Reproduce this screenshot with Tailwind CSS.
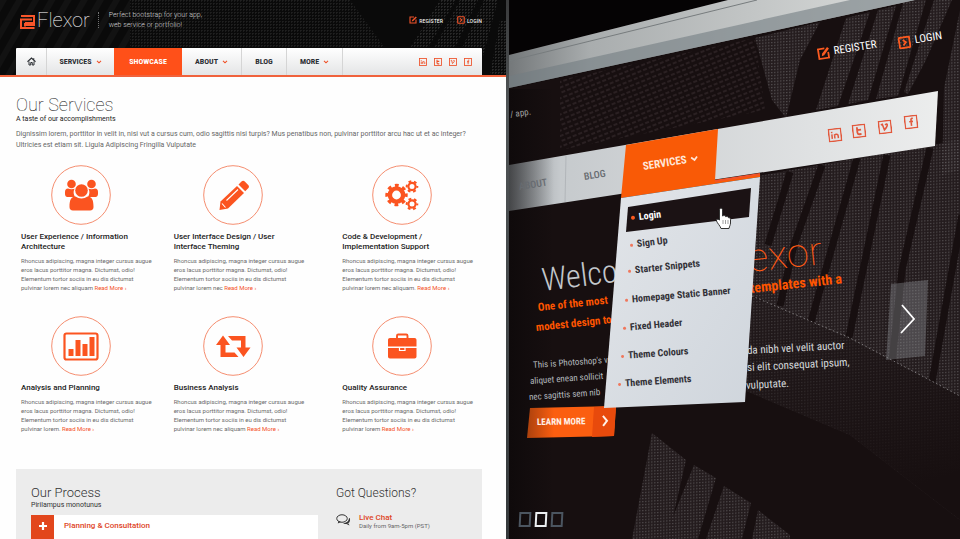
<!DOCTYPE html>
<html lang="en">
<head>
<meta charset="utf-8">
<meta name="viewport" content="width=device-width, initial-scale=1">
<title>Flexor</title>
<script src="https://cdn.jsdelivr.net/npm/@tailwindcss/browser@4"></script>
</head>
<body class="bg-[#0b0909] font-['Roboto',sans-serif]">
<svg class="absolute size-0" aria-hidden="true">
  <defs>
    <symbol id="chev" viewBox="0 0 8 6"><path d="M1 1.2 4 4.2 7 1.2" fill="none" stroke="currentColor" stroke-width="1.7"/></symbol>
    <symbol id="register" viewBox="0 0 16 16"><path d="M10 2H2v12h12V7" fill="none" stroke="currentColor" stroke-width="2.2"/><path d="M5.500 11 6.200 8 13.500.8 15.600 2.900 8.500 10.200Z" fill="currentColor"/></symbol>
    <symbol id="login" viewBox="0 0 16 16"><rect x="1.500" y="1.500" width="13" height="13" rx="1" fill="none" stroke="currentColor" stroke-width="2.300"/><path d="M6.300 4.700 9.700 8 6.300 11.300" fill="none" stroke="currentColor" stroke-width="2.200"/></symbol>
    <symbol id="in" viewBox="0 0 16 16"><rect x="1" y="1" width="14" height="14" fill="none" stroke="currentColor" stroke-width="1.700"/><path d="M4.500 7v5M4.500 4v1.600M7.500 12V7M7.500 9c0-2.400 4-2.400 4 0v3" fill="none" stroke="currentColor" stroke-width="1.700"/></symbol>
    <symbol id="tw" viewBox="0 0 16 16"><rect x="1" y="1" width="14" height="14" fill="none" stroke="currentColor" stroke-width="1.700"/><path d="M6 3.500v6c0 1.500.6 2.200 2 2.200h2.500M6 6.700h4.500" fill="none" stroke="currentColor" stroke-width="2.100"/></symbol>
    <symbol id="vi" viewBox="0 0 16 16"><rect x="1" y="1" width="14" height="14" fill="none" stroke="currentColor" stroke-width="1.700"/><path d="M3.500 5.200 5.200 4.600 7 11.200C9.500 9 11 7 10.800 5.500c-.2-1-1.500-.8-2.300.3" fill="none" stroke="currentColor" stroke-width="1.800"/></symbol>
    <symbol id="fb" viewBox="0 0 16 16"><rect x="1" y="1" width="14" height="14" fill="none" stroke="currentColor" stroke-width="1.700"/><path d="M10.500 4H9.600C8.500 4 8.200 4.600 8.200 5.500V12.500M6 7.500h4.300" fill="none" stroke="currentColor" stroke-width="1.800"/></symbol>
  </defs>
</svg>
<main class="grid h-screen grid-cols-[506fr_3px_451fr] overflow-hidden">
  <section class="flex flex-col overflow-hidden bg-[#fefefe]">
    <header class="relative border-b-2 border-[#f0623c] bg-[#0a0a0a]">
      <svg class="absolute inset-0 h-full w-full" preserveAspectRatio="xMinYMin slice" viewBox="0 0 506 75" aria-hidden="true">
        <defs>
          <pattern id="mesh" width="3" height="3" patternUnits="userSpaceOnUse"><path d="M0 .5H2M.5 0V2" stroke="#2b2b2b" stroke-width=".8"/></pattern>
          <pattern id="slant" width="14" height="14" patternUnits="userSpaceOnUse" patternTransform="rotate(30)"><rect width="6" height="14" fill="#121212"/></pattern>
        </defs>
        <rect width="130" height="75" fill="url(#slant)"/>
        <path d="M130 0H350L385 48H130Z" fill="url(#mesh)" opacity=".7"/>
        <path d="M410 48 440 0H456L428 48ZM434 48 460 0H478L455 48ZM462 48 484 0H498L482 60ZM490 75 500 20H506V75Z" fill="url(#mesh)"/>
      </svg>
      <div class="relative flex flex-col pr-6 pl-4">
        <div class="flex h-12 items-center pb-2 pl-1 text-white">
          <a href="#" class="flex items-center gap-px" aria-label="Flexor">
            <svg class="mt-1 size-4 text-[#f8552a]" viewBox="0 0 16 16" fill="none" stroke="currentColor" stroke-width="2" aria-hidden="true"><path d="M1 2H14V9H5M12 5.500H1V14H14.500M5 12.500V9M1 5.500H10M5 11H15"/></svg>
            <span class="text-[20px] leading-6 font-thin">Flexor</span>
          </a>
          <span class="ml-2 h-4 border-l border-dotted border-neutral-500"></span>
          <p class="ml-2.5 text-[7px] leading-[10px] font-light text-neutral-300">Perfect bootstrap for your app,<br>web service or portfolio!</p>
          <div class="ml-auto flex gap-3.5 font-['Roboto_Condensed','Liberation_Sans_Narrow',sans-serif] text-[6px] text-white">
            <a href="#" class="flex items-center gap-0.5"><svg class="size-2 text-[#f0532a]" aria-hidden="true"><use href="#register"/></svg>REGISTER</a>
            <a href="#" class="flex items-center gap-0.5"><svg class="size-2 text-[#f0532a]" aria-hidden="true"><use href="#login"/></svg>LOGIN</a>
          </div>
        </div>
        <nav class="flex h-[27px] rounded-t-[1px] bg-linear-to-b from-white to-[#e4e5e6] font-['Roboto_Condensed','Liberation_Sans_Narrow',sans-serif] text-[8px] font-bold text-[#2b2e33]">
          <a href="#" aria-label="Home" class="flex w-[31px] items-center justify-center border-r border-[#d5d5d5]"><svg class="size-[9px]" viewBox="0 0 18 18" fill="none" stroke="currentColor" aria-hidden="true"><path d="M1 9.500 9 2 17 9.500M13.500 2.500V6" stroke-width="2.200"/><path d="M4 9V16H7.500V11H10.500V16H14V9" stroke-width="2"/></svg></a>
          <a href="#" class="flex w-[67px] items-center justify-center gap-1">SERVICES<svg class="h-1 w-1.5 text-[#f0532a]" aria-hidden="true"><use href="#chev"/></svg></a>
          <a href="#" class="flex w-[68px] items-center justify-center bg-[#ff5019] text-white">SHOWCASE</a>
          <a href="#" class="flex w-[60px] items-center justify-center gap-1 border-r border-[#d5d5d5]">ABOUT<svg class="h-1 w-1.5 text-[#f0532a]" aria-hidden="true"><use href="#chev"/></svg></a>
          <a href="#" class="flex w-[45px] items-center justify-center border-r border-[#d5d5d5]">BLOG</a>
          <a href="#" class="flex w-[56px] items-center justify-center gap-1 border-r border-[#d5d5d5]">MORE<svg class="h-1 w-1.5 text-[#f0532a]" aria-hidden="true"><use href="#chev"/></svg></a>
          <div class="ml-auto flex items-center gap-[7px] pr-2.5 text-[#ee5028]">
            <a href="#" aria-label="LinkedIn"><svg class="size-2" aria-hidden="true"><use href="#in"/></svg></a>
            <a href="#" aria-label="Twitter"><svg class="size-2" aria-hidden="true"><use href="#tw"/></svg></a>
            <a href="#" aria-label="Vimeo"><svg class="size-2" aria-hidden="true"><use href="#vi"/></svg></a>
            <a href="#" aria-label="Facebook"><svg class="size-2" aria-hidden="true"><use href="#fb"/></svg></a>
          </div>
        </nav>
      </div>
    </header>

    <div class="pt-[18px] pr-6 pl-4">
      <h1 class="text-[18px] leading-5 font-thin text-[#111]">Our Services</h1>
      <p class="text-[7px] leading-[8px] text-[#222]">A taste of our accomplishments</p>
      <p class="mt-1.5 text-[7px] leading-[11px] whitespace-nowrap text-[#666]">Dignissim lorem, porttitor in velit in, nisi vut a cursus cum, odio sagittis nisi turpis? Mus penatibus non, pulvinar porttitor arcu hac ut et ac integer?<br>Ultricies est etiam sit. Ligula Adipiscing Fringilla Vulputate</p>
    </div>

    <div class="grid grid-cols-[153fr_169fr_164fr] gap-y-6 pt-[14px] pl-[21px] text-[6px] leading-[9px] text-[#6a6a6a]">
      <article class="flex flex-col gap-1">
        <svg class="ml-[30px] size-[60px]" viewBox="0 0 60 60" aria-hidden="true"><circle cx="30" cy="30" r="29.300" fill="none" stroke="#f58e70"/><g fill="#fb5420"><circle cx="20.500" cy="19" r="4.300"/><circle cx="40.500" cy="19" r="4.300"/><path d="M14 27c0-2 1-3.500 3-3.500 2 1 4.500 1 6.500.3C22 27 22.500 29.500 24 32h-7c-2.300 0-3.200-1-3-5ZM47 27c0-2-1-3.500-3-3.500-2 1-4.500 1-6.500.3C39 27 38.500 29.500 37 32h7c2.300 0 3.200-1 3-5Z"/><circle cx="30.500" cy="25.500" r="6.300"/><path d="M18.500 42c0-7 1.500-10.500 6-10.500 3.500 2.600 8.500 2.600 12 0 4.500 0 6 3.500 6 10.500 0 2-1.200 3.500-3.500 3.500H22c-2.300 0-3.500-1.500-3.500-3.500Z"/></g></svg>
        <h2 class="pt-[3px] text-[8px] leading-[10px] font-medium text-[#222]">User Experience / Information<br>Architecture</h2>
        <p>Rhoncus adipiscing, magna integer cursus augue<br>eros lacus porttitor magna. Dictumst, odio!<br>Elementum tortor sociis in eu dis dictumst<br>pulvinar lorem nec aliquam <a href="#" class="text-[#f4511e]">Read More ›</a></p>
      </article>
      <article class="flex flex-col gap-1">
        <svg class="ml-[29px] size-[60px]" viewBox="0 0 60 60" aria-hidden="true"><circle cx="30" cy="30" r="29.300" fill="none" stroke="#f58e70"/><g fill="#fb5420"><path d="M34 21 41 28 25 43.500 16.500 45 17.500 36.500Z"/><path d="m35.500 19.500 3-3c1-1 2.300-1 3.300 0l3.400 3.400c1 1 1 2.300 0 3.300l-3 3Z"/></g><path d="M23.500 35.500 35 24.500M19 38.500l3.500 4" fill="none" stroke="#fff" stroke-width="1.100"/></svg>
        <h2 class="pt-[3px] text-[8px] leading-[10px] font-medium text-[#222]">User Interface Design / User<br>Interface Theming</h2>
        <p>Rhoncus adipiscing, magna integer cursus augue<br>eros lacus porttitor magna. Dictumst, odio!<br>Elementum tortor sociis in eu dis dictumst<br>pulvinar lorem nec <a href="#" class="text-[#f4511e]">Read More ›</a></p>
      </article>
      <article class="flex flex-col gap-1">
        <svg class="ml-[30px] size-[60px]" viewBox="0 0 60 60" aria-hidden="true"><circle cx="30" cy="30" r="29.300" fill="none" stroke="#f58e70"/><g fill="none" stroke="#fb5420"><circle cx="24.500" cy="30" r="6.600" stroke-width="4.400"/><circle cx="24.500" cy="30" r="9.500" stroke-width="3.400" stroke-dasharray="3.730 3.730" stroke-dashoffset="1.870"/><circle cx="40" cy="21.500" r="3.600" stroke-width="2.200"/><circle cx="40" cy="21.500" r="5.300" stroke-width="2" stroke-dasharray="2.775 2.775" stroke-dashoffset="1.400"/><circle cx="40" cy="39" r="3.600" stroke-width="2.200"/><circle cx="40" cy="39" r="5.300" stroke-width="2" stroke-dasharray="2.775 2.775" stroke-dashoffset="1.400"/></g></svg>
        <h2 class="pt-[3px] text-[8px] leading-[10px] font-medium text-[#222]">Code &amp; Development /<br>Implementation Support</h2>
        <p>Rhoncus adipiscing, magna integer cursus augue<br>eros lacus porttitor magna. Dictumst, odio!<br>Elementum tortor sociis in eu dis dictumst<br>pulvinar lorem nec aliquam. <a href="#" class="text-[#f4511e]">Read More ›</a></p>
      </article>
      <article class="flex flex-col gap-1">
        <svg class="ml-[30px] size-[60px]" viewBox="0 0 60 60" aria-hidden="true"><circle cx="30" cy="30" r="29.300" fill="none" stroke="#f58e70"/><rect x="13.500" y="17.500" width="33" height="26" rx="2" fill="none" stroke="#fb5420" stroke-width="2.200"/><path d="M17.500 33h5v7h-5ZM24.500 24h5v16h-5ZM31.500 28h5v12h-5ZM38.500 21h5v19h-5Z" fill="#fb5420"/></svg>
        <h2 class="pt-[3px] text-[8px] leading-[10px] font-medium text-[#222]">Analysis and Planning</h2>
        <p>Rhoncus adipiscing, magna integer cursus augue<br>eros lacus porttitor magna. Dictumst, odio!<br>Elementum tortor sociis in eu dis dictumst<br>pulvinar lorem. <a href="#" class="text-[#f4511e]">Read More ›</a></p>
      </article>
      <article class="flex flex-col gap-1">
        <svg class="ml-[29px] size-[60px]" viewBox="0 0 60 60" aria-hidden="true"><circle cx="30" cy="30" r="29.300" fill="none" stroke="#f58e70"/><path d="M20 19.500 27 29H22.500V36.500H31.500L35.500 41H17.500V29H13ZM25 20H42.500V31.500H47.500L40.500 41 33.500 31.500H38V24.500H29Z" fill="#fb5420"/></svg>
        <h2 class="pt-[3px] text-[8px] leading-[10px] font-medium text-[#222]">Business Analysis</h2>
        <p>Rhoncus adipiscing, magna integer cursus augue<br>eros lacus porttitor magna. Dictumst, odio!<br>Elementum tortor sociis in eu dis dictumst<br>pulvinar lorem nec aliquam <a href="#" class="text-[#f4511e]">Read More ›</a></p>
      </article>
      <article class="flex flex-col gap-1">
        <svg class="ml-[30px] size-[60px]" viewBox="0 0 60 60" aria-hidden="true"><circle cx="30" cy="30" r="29.300" fill="none" stroke="#f58e70"/><path d="M25 23v-3.200c0-.7.500-1.300 1.300-1.300h7.900c.8 0 1.300.6 1.300 1.300V23" fill="none" stroke="#fb5420" stroke-width="1.900"/><path d="M18 22H42.500c1.200 0 2 .8 2 2v6.500H16V24c0-1.200.8-2 2-2ZM16 32H44.500v8.500c0 1.200-.8 2-2 2H18c-1.200 0-2-.8-2-2Z" fill="#fb5420"/><path d="M27.500 31.500v3h5.500v-3" fill="none" stroke="#fff" stroke-width="1.200"/></svg>
        <h2 class="pt-[3px] text-[8px] leading-[10px] font-medium text-[#222]">Quality Assurance</h2>
        <p>Rhoncus adipiscing, magna integer cursus augue<br>eros lacus porttitor magna. Dictumst, odio!<br>Elementum tortor sociis in eu dis dictumst<br>pulvinar lorem <a href="#" class="text-[#f4511e]">Read More ›</a></p>
      </article>
    </div>

    <div class="mt-9 mr-6 ml-4 grid min-h-24 flex-none grid-cols-[305fr_146fr] bg-[#ececec] pt-4 pl-[15px]">
      <div>
        <h2 class="text-[13px] leading-4 font-light text-[#333]">Our Process</h2>
        <p class="text-[7px] leading-[8px] text-[#333]">Pirilampus monotunus</p>
        <div class="mt-1.5 mr-[18px] flex h-12 bg-white">
          <button type="button" aria-label="Expand" class="flex w-[23px] justify-center bg-[#e2461c] pt-1.5"><svg class="size-2.5 text-white" viewBox="0 0 10 10" aria-hidden="true"><path d="M5 1V9M1 5H9" stroke="currentColor" stroke-width="2.200"/></svg></button>
          <h3 class="pt-1.5 pl-2.5 text-[8px] leading-[10px] font-medium text-[#de451f]">Planning &amp; Consultation</h3>
        </div>
      </div>
      <div>
        <h2 class="text-[12px] leading-4 font-light text-[#333]">Got Questions?</h2>
        <div class="mt-3 flex gap-2">
          <svg class="mt-px h-3 w-[15px]" viewBox="0 0 30 24" aria-hidden="true"><path d="M21 20c5-1 8-5 7-11l-2-1c0 6-5 10-12 10 2 2 5 2 7 2l6 3-2-4Z" fill="#333"/><ellipse cx="12" cy="9" rx="10.500" ry="7.500" fill="#ececec" stroke="#333" stroke-width="2"/><path d="M5 14 3.500 19 10 16" fill="#333"/></svg>
          <div>
            <a href="#" class="block text-[8px] leading-[9px] font-medium text-[#de451f]">Live Chat</a>
            <p class="text-[6px] leading-[8px] text-[#666]">Daily from 9am-5pm (PST)</p>
          </div>
        </div>
      </div>
    </div>
  </section>

  <div class="bg-linear-to-b from-[#3a3b3c] via-[#505456] via-20% to-[#35393b]"></div>

  <section class="relative overflow-hidden bg-[#150e0f] font-['Roboto_Condensed','Liberation_Sans_Narrow',sans-serif]">
    <svg class="absolute inset-0 h-full w-full" viewBox="509 0 451 539" preserveAspectRatio="xMinYMin slice" aria-hidden="true">
      <defs>
        <pattern id="dots" width="3" height="3" patternUnits="userSpaceOnUse" patternTransform="skewY(-4)"><rect width="3" height="3" fill="#2a2224"/><rect width="1.500" height="1.200" fill="#625e60"/></pattern>
        <pattern id="faint" width="6" height="5" patternUnits="userSpaceOnUse" patternTransform="rotate(-22)"><rect width="4" height="2" fill="#2a2022"/></pattern>
        <linearGradient id="chrome" x1="0" x2="1"><stop offset="0" stop-color="#74787a"/><stop offset=".2" stop-color="#a9adae"/><stop offset="1" stop-color="#dcdedd"/></linearGradient>
        <linearGradient id="bar" x1="0" x2="1"><stop offset="0" stop-color="#8f9498"/><stop offset=".12" stop-color="#c6cacd"/><stop offset="1" stop-color="#eceded"/></linearGradient>
        <linearGradient id="edge" x1="0" x2="1"><stop offset="0" stop-color="#080607"/><stop offset="1" stop-color="#080607" stop-opacity="0"/></linearGradient>
        <linearGradient id="fade" x1="0" y1="0" x2=".3" y2="1"><stop offset="0" stop-color="#170f10" stop-opacity="0"/><stop offset="1" stop-color="#170f10"/></linearGradient>
        <linearGradient id="menu" x1="0" y1="0" x2="1" y2="1"><stop offset="0" stop-color="#e2e5e9"/><stop offset="1" stop-color="#cfd5dc"/></linearGradient>
      </defs>
      <path d="M509 89 912 0H960V539H509Z" fill="#170f10"/>
      <path d="M560 80 755 38 765 110 560 150Z" fill="url(#faint)"/>
      <path d="M755 38 820 22 800 60 786 118 772 100ZM846 18 870 12 838 106 816 110ZM878 10 896 6 868 100 848 104ZM904 0 926 0 898 96 876 99ZM934 0H952L926 60 908 94 904 92ZM960 10V170L942 175 944 88Z" fill="url(#dots)" opacity=".75"/>
      <path d="M758 176 960 140V396L848 338 752 296Z" fill="url(#dots)" opacity=".7"/>
      <path d="M790 172 768 245M822 165 794 245 780 306M857 158 811 322M887 155 848 342M930 148 902 270 892 362M962 215 932 382" fill="none" stroke="#170f10" stroke-width="7"/>
      <path d="M750 296 850 338 960 396V520L850 435 744 390Z" fill="url(#dots)" opacity=".6"/>
      <path d="M750 296 850 338 960 396V520L850 435 744 390Z" fill="url(#fade)"/>
      <path d="M752 296 850 338 960 396" fill="none" stroke="#7d797b" stroke-width="1" stroke-dasharray="1.500 2.500"/>
      <path d="M652 433 686 460 668 539H632ZM694 465 716 478 698 539H664ZM724 486 751 503 742 539H706ZM758 510 790 535V539H752Z" fill="url(#dots)" opacity=".7"/>
      <path d="M509 0H728L509 55Z" fill="#050304"/>
      <path d="M509 55 728 0H915L509 88Z" fill="url(#chrome)"/>
      <path d="M509 61 757 0" stroke="#777c7e" stroke-width="1"/>
      <path d="M509 76 850 0H915L509 88Z" fill="#737d82" opacity=".6"/>
      <path d="M509 165 938 91 935 146 509 211Z" fill="url(#bar)"/>
      <path d="M566 156 565 202" stroke="#b2b6ba"/>
      <path d="M626 145 718 129 715 180 760 174V177L621 198Z" fill="#f95a06"/>
      <path d="M715 181 760 174" stroke="#f0532a" stroke-width="2"/>
      <path d="M891 284 928 280 925 356 886 360Z" fill="#8a8c92" opacity=".4"/>
      <path d="M902 305 914 319 901 333" fill="none" stroke="#fff" stroke-width="1.800"/>
      <path d="M530 408 616 406 614 436 527 438Z" fill="#fb5e10"/>
      <path d="M594 407 616 406 614 436 592 437Z" fill="#e84a0c"/>
      <rect x="509" y="89" width="45" height="450" fill="url(#edge)" opacity=".55"/>
    </svg>

    <span class="absolute top-[107px] left-px -rotate-8 text-[9px] leading-3 text-neutral-400">/ app.</span>
    <a href="#" class="absolute top-[46px] left-[308px] flex origin-left -rotate-9 items-center gap-1 text-[11px] leading-4 text-white"><svg class="size-[13px] text-[#fb5a20]" aria-hidden="true"><use href="#register"/></svg>REGISTER</a>
    <a href="#" class="absolute top-[35px] left-[389px] flex origin-left -rotate-9 items-center gap-1 text-[11px] leading-4 text-white"><svg class="size-[13px] text-[#fb5a20]" aria-hidden="true"><use href="#login"/></svg>LOGIN</a>

    <a href="#" class="absolute top-[179px] left-[10px] origin-left -rotate-9 text-[10px] leading-4 font-medium text-[#676b70]">ABOUT</a>
    <a href="#" class="absolute top-[169px] left-[75px] origin-left -rotate-9 text-[10px] leading-4 font-medium text-[#676b70]">BLOG</a>
    <a href="#" class="absolute top-[159px] left-[134px] flex origin-left -rotate-9 items-center gap-1 text-[11px] leading-4 font-bold text-[#ffe6d8]">SERVICES<svg class="h-1.5 w-2" aria-hidden="true"><use href="#chev"/></svg></a>
    <a href="#" aria-label="LinkedIn" class="absolute top-[128px] left-[319px] -rotate-6 text-[#e2583c]"><svg class="size-[14px]" aria-hidden="true"><use href="#in"/></svg></a>
    <a href="#" aria-label="Twitter" class="absolute top-[124px] left-[343px] -rotate-6 text-[#e2583c]"><svg class="size-[14px]" aria-hidden="true"><use href="#tw"/></svg></a>
    <a href="#" aria-label="Vimeo" class="absolute top-[120px] left-[369px] -rotate-6 text-[#e2583c]"><svg class="size-[14px]" aria-hidden="true"><use href="#vi"/></svg></a>
    <a href="#" aria-label="Facebook" class="absolute top-[115px] left-[395px] -rotate-6 text-[#e2583c]"><svg class="size-[14px]" aria-hidden="true"><use href="#fb"/></svg></a>

    <h2 class="leading-10">
      <span class="absolute top-[260px] left-[33px] origin-left -rotate-7 text-[32px] font-light text-[#c3c7cb]">Welco</span>
      <span class="absolute top-[239px] left-[239px] origin-left -rotate-6 font-['Roboto',sans-serif] text-[40px] font-thin text-[#ff5a14]">exor</span>
    </h2>
    <p class="leading-4 font-bold whitespace-nowrap text-[#ff5500]">
      <span class="absolute top-[300px] left-[29px] origin-left -rotate-6 text-[11px]">One of the most</span>
      <span class="absolute top-[320px] left-[27px] origin-left -rotate-6 text-[11px]">modest design to</span>
      <span class="absolute top-[280px] left-[241px] origin-left -rotate-6 text-[14px]">templates with a</span>
    </p>
    <p class="text-[9px] leading-4 whitespace-nowrap text-[#b4babf]">
      <span class="absolute top-[357px] left-[24px] origin-left -rotate-4">This is Photoshop's v</span>
      <span class="absolute top-[373px] left-[21px] origin-left -rotate-4">aliquet enean sollicit</span>
      <span class="absolute top-[389px] left-[20px] origin-left -rotate-4">nec sagittis sem nib</span>
    </p>
    <p class="text-[11px] leading-4 whitespace-nowrap text-[#d5d9db]">
      <span class="absolute top-[343px] left-[238px] origin-left -rotate-3">da nibh vel velit auctor</span>
      <span class="absolute top-[360px] left-[238px] origin-left -rotate-3">si elit consequat ipsum,</span>
      <span class="absolute top-[378px] left-[237px] origin-left -rotate-3">vulputate.</span>
    </p>
    <button type="button" class="absolute top-[414px] left-[28px] flex origin-left -rotate-1 items-center gap-4 text-[9px] leading-4 font-bold text-[#fff1e8]">LEARN MORE<svg class="h-3 w-2" viewBox="0 0 8 12" aria-hidden="true"><path d="M2 1 6 6 2 11" fill="none" stroke="currentColor" stroke-width="2"/></svg></button>

    <svg class="absolute inset-0 h-full w-full" viewBox="509 0 451 539" preserveAspectRatio="xMinYMin slice" aria-hidden="true">
      <path d="M621 198 760 177 745 402 604 408Z" fill="url(#menu)"/>
      <path d="M628 207 751 188 749 217 626 232Z" fill="#1b1214"/>
    </svg>
    <ul class="text-[10px] leading-4 font-bold whitespace-nowrap text-[#333238]">
      <li class="absolute top-[210px] left-[122px] flex origin-left -rotate-7 items-center gap-1 text-white before:size-1 before:rounded-full before:bg-[#fb5a20]"><a href="#">Login</a></li>
      <li class="absolute top-[237px] left-[121px] flex origin-left -rotate-7 items-center gap-1 before:size-[3px] before:rounded-full before:bg-[#f0775c]"><a href="#">Sign Up</a></li>
      <li class="absolute top-[263px] left-[119px] flex origin-left -rotate-6 items-center gap-1 before:size-[3px] before:rounded-full before:bg-[#f0775c]"><a href="#">Starter Snippets</a></li>
      <li class="absolute top-[292px] left-[116px] flex origin-left -rotate-5 items-center gap-1 before:size-[3px] before:rounded-full before:bg-[#f0775c]"><a href="#">Homepage Static Banner</a></li>
      <li class="absolute top-[320px] left-[114px] flex origin-left -rotate-5 items-center gap-1 before:size-[3px] before:rounded-full before:bg-[#f0775c]"><a href="#">Fixed Header</a></li>
      <li class="absolute top-[348px] left-[112px] flex origin-left -rotate-4 items-center gap-1 before:size-[3px] before:rounded-full before:bg-[#f0775c]"><a href="#">Theme Colours</a></li>
      <li class="absolute top-[376px] left-[109px] flex origin-left -rotate-4 items-center gap-1 before:size-[3px] before:rounded-full before:bg-[#f0775c]"><a href="#">Theme Elements</a></li>
    </ul>
    <svg class="absolute top-[207px] left-[206px] h-[23px] w-4" viewBox="0 0 16 23" aria-hidden="true"><path d="M4.500 13V3c0-2.300 3-2.300 3 0v6c1.500-.8 3-.5 3.200.7 1.500-.5 2.600 0 2.800 1 1.300-.2 2 .4 2 1.800v3.500c0 2-1 3-1.500 5.500H6C5 18.500 2.500 16.500 1.500 14c-.5-1.600 1.200-2.400 3-1Z" fill="#fff" stroke="#333" stroke-width="1"/><path d="M8 13v4M10.500 13v4M13 13v4" stroke="#777" stroke-width=".7"/></svg>

    <div class="absolute top-[512px] left-[10px] flex gap-1">
      <button type="button" aria-label="Slide 1" class="h-[15px] w-3 -skew-x-3 border-2 border-[#4b5560]"></button>
      <button type="button" aria-label="Slide 2" class="h-[15px] w-3 -skew-x-3 border-2 border-[#eceff1]"></button>
      <button type="button" aria-label="Slide 3" class="h-[15px] w-3 -skew-x-3 border-2 border-[#4b5560]"></button>
    </div>
  </section>
</main>
</body>
</html>
